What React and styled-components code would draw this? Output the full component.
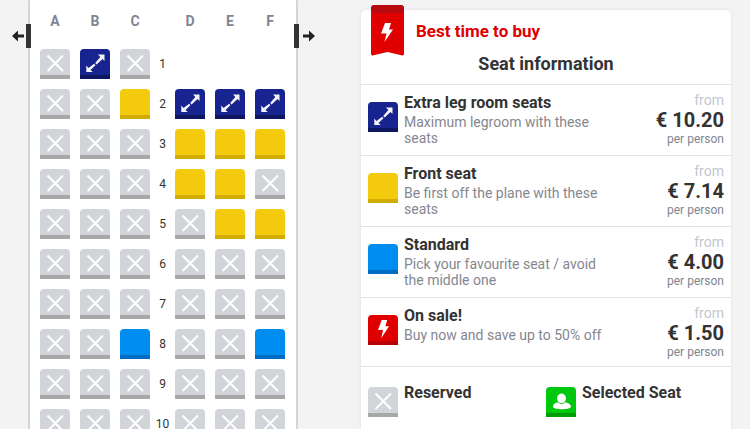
import React, { useState } from 'react';
import styled, { createGlobalStyle } from 'styled-components';

const GlobalStyle = createGlobalStyle`
  * { box-sizing: border-box; }
  body {
    margin: 0;
    overflow: hidden;
    background: #f3f3f3;
    color: #333;
    font-family: Roboto, 'Liberation Sans', sans-serif;
    font-size: 14px;
  }
  h2, h3, p { margin: 0; }
`;

const palette = {
  legroom: ['#17238e', '#0d1660'],
  front: ['#f4cb0c', '#d3ac02'],
  standard: ['#008df0', '#006cc4'],
  sale: ['#e10000', '#b80008'],
  reserved: ['#d1d5da', '#a8a8a8'],
  selected: ['#00c80f', '#009e06'],
};

const Page = styled.main`
  display: flex;
  align-items: flex-start;
  gap: 63px;
  height: 100vh;
  padding: 0 19px 0 28px;
`;

const Fuselage = styled.section`
  position: relative;
  flex: none;
  margin-top: -12px;
  padding: 24px 11px 20px 10px;
  background: #fff;
  border: solid #d1d6dc;
  border-width: 0 2px;
  border-radius: 4px 4px 0 0 / 20px 20px 0 0;
`;

const SeatRow = styled.div`
  display: grid;
  grid-template-columns: 40px 40px 30px 25px 40px 40px 30px;
  height: 40px;
`;

const ColumnNames = styled(SeatRow)`
  height: 37px;
`;

const ColumnName = styled.span`
  width: 30px;
  line-height: 18px;
  text-align: center;
  font-weight: 700;
  color: #7f8593;
`;

const RowNumber = styled.span`
  line-height: 30px;
  text-align: center;
  font-size: 12px;
`;

const ExitMark = styled.span`
  position: absolute;
  top: 36px;
  display: flex;
  align-items: center;
  gap: ${(p) => (p.$side === 'left' ? 2 : 4)}px;
  ${(p) => (p.$side === 'left' ? 'right: calc(100% - 1px);' : 'left: calc(100% - 2px);')}
  ${(p) => (p.$side === 'left' ? '' : 'flex-direction: row-reverse;')}
`;

const ExitDoor = styled.span`
  width: 5px;
  height: 24px;
  background: #333;
`;

const seatStyle = (p) => `
  display: flex;
  flex: none;
  width: 30px;
  height: 30px;
  padding: 0;
  border: 0;
  border-radius: 4px 4px 0 0;
  background: ${palette[p.$kind][0]};
  box-shadow: inset 0 -4px ${palette[p.$kind][1]};
`;

const SeatButton = styled.button`
  ${seatStyle}
  cursor: pointer;
  &:disabled { cursor: default; }
`;

const SeatSample = styled.span`
  ${seatStyle}
  margin-top: ${(p) => (p.$compact ? 0 : 9)}px;
`;

const InfoCard = styled.section`
  position: relative;
  flex: 1;
  min-width: 0;
  margin-top: 10px;
  padding-bottom: 24px;
  background: #fff;
  border-radius: 5px 5px 0 0;
  box-shadow: 0 0 3px rgba(0, 0, 0, 0.1);
`;

const Ribbon = styled.svg`
  position: absolute;
  top: -5px;
  left: 10px;
`;

const CardHeader = styled.header`
  padding: 11px 0 9px;
`;

const BuyNote = styled.p`
  padding-left: 55px;
  line-height: 20px;
  font-size: 17px;
  font-weight: 700;
  color: #e10000;
`;

const CardTitle = styled.h2`
  margin-top: 12px;
  line-height: 22px;
  text-align: center;
  font-size: 18px;
  font-weight: 700;
`;

const FareRow = styled.article`
  display: flex;
  gap: 6px;
  padding: 8px 7px;
  border-top: 1px solid #e1e2e4;
`;

const FareText = styled.div`
  flex: 1;
  padding-bottom: 1px;
`;

const FareTitle = styled.h3`
  line-height: 20px;
  font-size: 16px;
  font-weight: 700;
`;

const FareDescription = styled.p`
  padding-top: 1px;
  line-height: 16px;
  color: #84878f;
`;

const PriceBlock = styled.div`
  flex: none;
  width: 106px;
  text-align: right;
`;

const FromLabel = styled.p`
  line-height: 14px;
  color: #c2c7cf;
`;

const Price = styled.p`
  line-height: 26px;
  font-size: 20px;
  font-weight: 700;
`;

const PerPerson = styled.p`
  line-height: 12px;
  font-size: 12px;
  color: #7f8593;
`;

const Legend = styled.div`
  display: grid;
  grid-template-columns: 1fr 1fr;
  padding: 20px 7px;
  border-top: 1px solid #e1e2e4;
`;

const LegendItem = styled.div`
  display: flex;
  gap: 6px;
`;

const LegendLabel = styled.h3`
  margin-top: -4px;
  line-height: 20px;
  font-size: 16px;
  font-weight: 700;
`;

const BOLT = 'M4 0h6L8 6.500h4L3.500 19 5.500 10.500H0z';

function SeatIcon({ kind }) {
  return (
    <svg width="30" height="30" viewBox="0 0 30 30" aria-hidden="true">
      {kind === 'reserved' && (
        <path d="M7.500 6.500 23 22M23 6.500 7.500 22" stroke="#fff" strokeWidth="2" fill="none" />
      )}
      {kind === 'legroom' && (
        <g fill="#f4f4fa">
          <path d="M18 5.500H24.500V12L22.500 10.100 16.600 15.500 15.200 14 20.300 8z" />
          <path d="M6.300 16.500V23H12.800L10.500 21 15.500 16.300 14.100 14.800 8.500 19z" />
        </g>
      )}
      {kind === 'sale' && <path d={BOLT} transform="translate(10 5) scale(.92 .96)" fill="#fff" />}
      {kind === 'selected' && (
        <g fill="#fff">
          <ellipse cx="15.500" cy="11.300" rx="4.500" ry="4.800" />
          <path d="M7 20c0-2.900 2.300-4.100 5-4.700 2 2.100 5 2.100 7 0 2.700.6 6 1.800 6 4.700-1 3-17 3-18 0z" />
        </g>
      )}
    </svg>
  );
}

function ExitArrow({ side }) {
  return (
    <svg width="12" height="12" viewBox="0 0 12 12" aria-hidden="true">
      <path
        d="M0 6 6 .5V4.500H12V7.500H6V11.500z"
        fill="#222"
        transform={side === 'right' ? 'matrix(-1 0 0 1 12 0)' : undefined}
      />
    </svg>
  );
}

function Exit({ side }) {
  return (
    <ExitMark $side={side}>
      <ExitArrow side={side} />
      <ExitDoor />
    </ExitMark>
  );
}

const R = 'reserved';
const L = 'legroom';
const F = 'front';
const S = 'standard';
const rows = [
  [R, L, R, null, null, null],
  [R, R, F, L, L, L],
  [R, R, R, F, F, F],
  [R, R, R, F, F, R],
  [R, R, R, R, F, F],
  [R, R, R, R, R, R],
  [R, R, R, R, R, R],
  [R, R, S, R, R, S],
  [R, R, R, R, R, R],
  [R, R, R, R, R, R],
];
const letters = ['A', 'B', 'C', 'D', 'E', 'F'];

const fares = [
  { kind: 'legroom', title: 'Extra leg room seats', text: 'Maximum legroom with these seats', price: '€ 10.20' },
  { kind: 'front', title: 'Front seat', text: 'Be first off the plane with these seats', price: '€ 7.14' },
  { kind: 'standard', title: 'Standard', text: 'Pick your favourite seat / avoid the middle one', price: '€ 4.00' },
  { kind: 'sale', title: 'On sale!', text: 'Buy now and save up to 50% off', price: '€ 1.50' },
];

function Seat({ kind, name, selected, onSelect }) {
  if (!kind) return <span />;
  const shown = selected ? 'selected' : kind;
  return (
    <SeatButton
      type="button"
      $kind={shown}
      disabled={kind === 'reserved'}
      aria-label={name}
      aria-pressed={selected}
      onClick={() => onSelect(selected ? null : name)}
    >
      <SeatIcon kind={shown} />
    </SeatButton>
  );
}

export default function App() {
  const [chosen, setChosen] = useState(null);
  const seat = (kind, row, col) => {
    const name = `${row}${letters[col]}`;
    return <Seat key={name} kind={kind} name={name} selected={chosen === name} onSelect={setChosen} />;
  };

  return (
    <>
      <GlobalStyle />
      <Page>
        <Fuselage>
          <Exit side="left" />
          <Exit side="right" />
          <ColumnNames>
            {letters.slice(0, 3).map((l) => <ColumnName key={l}>{l}</ColumnName>)}
            <span />
            {letters.slice(3).map((l) => <ColumnName key={l}>{l}</ColumnName>)}
          </ColumnNames>
          {rows.map((kinds, i) => (
            <SeatRow key={i}>
              {kinds.slice(0, 3).map((k, c) => seat(k, i + 1, c))}
              <RowNumber>{i + 1}</RowNumber>
              {kinds.slice(3).map((k, c) => seat(k, i + 1, c + 3))}
            </SeatRow>
          ))}
        </Fuselage>

        <InfoCard>
          <Ribbon width="33" height="51" viewBox="0 0 33 51" aria-hidden="true">
            <path d="M3.500 0h26Q33 0 33 3.500V49q0 2-2.500 1.300L16.500 47 2.500 50.300Q0 51 0 49V3.500Q0 0 3.500 0z" fill="#e10000" />
            <path d="M3.500 0h26Q33 0 33 3.500V8H0V3.500Q0 0 3.500 0z" fill="#b80a0e" />
            <path d={BOLT} transform="translate(10 18)" fill="#fff" />
          </Ribbon>
          <CardHeader>
            <BuyNote>Best time to buy</BuyNote>
            <CardTitle>Seat information</CardTitle>
          </CardHeader>
          {fares.map((fare) => (
            <FareRow key={fare.kind}>
              <SeatSample $kind={fare.kind}><SeatIcon kind={fare.kind} /></SeatSample>
              <FareText>
                <FareTitle>{fare.title}</FareTitle>
                <FareDescription>{fare.text}</FareDescription>
              </FareText>
              <PriceBlock>
                <FromLabel>from</FromLabel>
                <Price>{fare.price}</Price>
                <PerPerson>per person</PerPerson>
              </PriceBlock>
            </FareRow>
          ))}
          <Legend>
            <LegendItem>
              <SeatSample $kind="reserved" $compact><SeatIcon kind="reserved" /></SeatSample>
              <LegendLabel>Reserved</LegendLabel>
            </LegendItem>
            <LegendItem>
              <SeatSample $kind="selected" $compact><SeatIcon kind="selected" /></SeatSample>
              <LegendLabel>Selected Seat</LegendLabel>
            </LegendItem>
          </Legend>
        </InfoCard>
      </Page>
    </>
  );
}
